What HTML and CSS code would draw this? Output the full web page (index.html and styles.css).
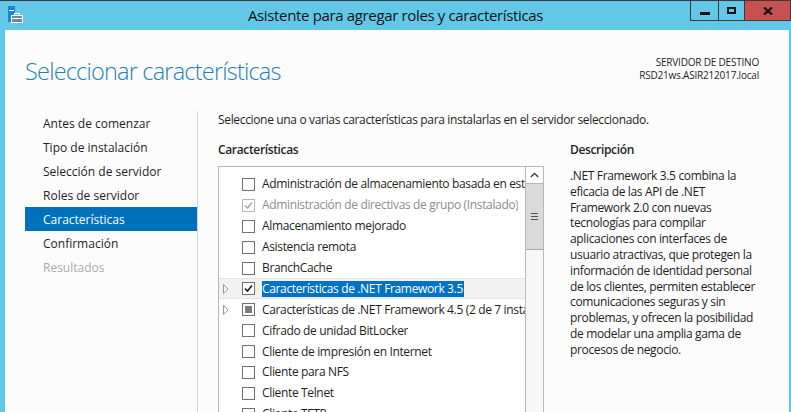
FILE: index.html
```html
<!DOCTYPE html>
<html lang="es">
<head>
<meta charset="utf-8">
<title>Asistente para agregar roles y características</title>
<link rel="stylesheet" href="styles.css">
</head>
<body>
<div class="window">
  <div class="titlebar">
    <div class="tb-icon">
      <svg width="26" height="26" viewBox="0 0 26 26">
        <rect x="8" y="6" width="7" height="16" fill="#1c86d6"/>
        <rect x="9" y="10" width="5" height="1" fill="#ffffff"/>
        <rect x="14.5" y="13.5" width="5" height="3" fill="none" stroke="#ffffff" stroke-width="1"/>
        <rect x="11.5" y="15.5" width="11" height="7" fill="#6c8798" stroke="#ffffff" stroke-width="1"/>
        <rect x="12" y="18" width="10" height="1" fill="#ffffff"/>
      </svg>
    </div>
    <div class="tb-title">Asistente para agregar roles y características</div>
    <div class="tb-buttons">
      <div class="btn btn-min"><span class="glyph-min"></span></div>
      <div class="btn btn-max"><span class="glyph-max"></span></div>
      <div class="btn btn-close">
        <svg width="10" height="8" viewBox="0 0 10 8"><path d="M1 0.5 L9 7.5 M9 0.5 L1 7.5" stroke="#111" stroke-width="2.2"/></svg>
      </div>
    </div>
  </div>
  <div class="client">
    <header class="header">
      <h1 class="page-title">Seleccionar características</h1>
      <div class="dest">
        <div>SERVIDOR DE DESTINO</div>
        <div>RSD21ws.ASIR212017.local</div>
      </div>
    </header>
    <div class="main">
      <nav class="nav">
        <div class="nav-item">Antes de comenzar</div>
        <div class="nav-item">Tipo de instalación</div>
        <div class="nav-item">Selección de servidor</div>
        <div class="nav-item">Roles de servidor</div>
        <div class="nav-item active">Características</div>
        <div class="nav-item">Confirmación</div>
        <div class="nav-item disabled">Resultados</div>
      </nav>
      <div class="content">
        <p class="intro">Seleccione una o varias características para instalarlas en el servidor seleccionado.</p>
        <div class="cols">
          <div class="features">
            <div class="col-title">Características</div>
            <div class="listbox">
              <div class="list">
                <div class="row"><span class="exp"></span><span class="cb"></span><span class="label">Administración de almacenamiento basada en estándares</span></div>
                <div class="row installed"><span class="exp"></span><span class="cb checked"><svg width="11" height="11" viewBox="0 0 11 11"><path d="M2 5.5 L4.5 8 L9 2.5" fill="none" stroke="#a5a5a5" stroke-width="1.5"/></svg></span><span class="label">Administración de directivas de grupo (Instalado)</span></div>
                <div class="row"><span class="exp"></span><span class="cb"></span><span class="label">Almacenamiento mejorado</span></div>
                <div class="row"><span class="exp"></span><span class="cb"></span><span class="label">Asistencia remota</span></div>
                <div class="row"><span class="exp"></span><span class="cb"></span><span class="label">BranchCache</span></div>
                <div class="row selected"><span class="exp"><svg width="6" height="10" viewBox="0 0 6 10"><path d="M0.5 0.5 L5 5 L0.5 9.5 Z" fill="none" stroke="#9a9a9a" stroke-width="1"/></svg></span><span class="cb checked"><svg width="11" height="11" viewBox="0 0 11 11"><path d="M2 5.5 L4.5 8 L9 2.5" fill="none" stroke="#1a1a1a" stroke-width="1.6"/></svg></span><span class="label"><span class="hl">Características de .NET Framework 3.5</span></span></div>
                <div class="row"><span class="exp"><svg width="6" height="10" viewBox="0 0 6 10"><path d="M0.5 0.5 L5 5 L0.5 9.5 Z" fill="none" stroke="#9a9a9a" stroke-width="1"/></svg></span><span class="cb partial"><span class="fill"></span></span><span class="label">Características de .NET Framework 4.5 (2 de 7 instalados)</span></div>
                <div class="row"><span class="exp"></span><span class="cb"></span><span class="label">Cifrado de unidad BitLocker</span></div>
                <div class="row"><span class="exp"></span><span class="cb"></span><span class="label">Cliente de impresión en Internet</span></div>
                <div class="row"><span class="exp"></span><span class="cb"></span><span class="label">Cliente para NFS</span></div>
                <div class="row"><span class="exp"></span><span class="cb"></span><span class="label">Cliente Telnet</span></div>
                <div class="row"><span class="exp"></span><span class="cb"></span><span class="label">Cliente TFTP</span></div>
              </div>
              <div class="scrollbar">
                <div class="sb-up"><svg width="9" height="6" viewBox="0 0 9 6"><path d="M0.8 5 L4.5 1.3 L8.2 5" fill="none" stroke="#333" stroke-width="1.3"/></svg></div>
                <div class="sb-thumb"><span class="grip"></span><span class="grip"></span><span class="grip"></span></div>
                <div class="sb-track"></div>
              </div>
            </div>
          </div>
          <div class="desc">
            <div class="col-title">Descripción</div>
            <p class="desc-text">.NET Framework 3.5 combina la<br>eficacia de las API de .NET<br>Framework 2.0 con nuevas<br>tecnologías para compilar<br>aplicaciones con interfaces de<br>usuario atractivas, que protegen la<br>información de identidad personal<br>de los clientes, permiten establecer<br>comunicaciones seguras y sin<br>problemas, y ofrecen la posibilidad<br>de modelar una amplia gama de<br>procesos de negocio.</p>
          </div>
        </div>
      </div>
    </div>
  </div>
</div>
</body>
</html>
```
FILE: styles.css
```css
html, body {
  margin: 0;
  padding: 0;
  height: 100%;
  overflow: hidden;
}
body {
  background: #63c8e8;
  font-family: "Open Sans", "Noto Sans", sans-serif;
  color: #1e1e1e;
}
.window {
  height: 412px;
  box-sizing: border-box;
  border-top: 1px solid #3a3a3a;
  display: flex;
  flex-direction: column;
}
.titlebar {
  height: 29px;
  flex: none;
  display: grid;
  grid-template-columns: 1fr auto 1fr;
  align-items: start;
}
.tb-icon {
  height: 26px;
  margin-top: -1px;
}
.tb-icon svg { display: block; }
.tb-title {
  font-size: 15px;
  line-height: 29px;
  letter-spacing: -0.35px;
  color: #121212;
  white-space: nowrap;
}
.tb-buttons {
  justify-self: end;
  display: flex;
}
.btn {
  box-sizing: border-box;
  height: 20px;
  border-right: 1px solid #3a3a3a;
  border-bottom: 1px solid #3a3a3a;
  display: flex;
  align-items: center;
  justify-content: center;
}
.btn-min { width: 29px; border-left: 1px solid #3a3a3a; }
.btn-max { width: 26px; }
.btn-close { width: 46px; background: #c75050; }
.glyph-min {
  width: 10px;
  height: 3px;
  background: #111;
  margin-top: 5px;
}
.glyph-max {
  width: 5px;
  height: 3px;
  border: 2px solid #111;
}
.btn-close svg { display: block; }
.client {
  flex: 1;
  margin: 0 2px 0 5px;
  background: #fcfcfc;
  display: flex;
  flex-direction: column;
  min-height: 0;
}
.header {
  height: 81px;
  flex: none;
  display: flex;
  justify-content: space-between;
  padding: 0 30px 0 20px;
}
.page-title {
  margin: 0;
  padding-top: 25px;
  font-size: 23.5px;
  line-height: 32px;
  font-weight: 300;
  letter-spacing: -0.8px;
  color: #1f80b6;
  white-space: nowrap;
}
.dest {
  margin-top: 26px;
  font-size: 10px;
  line-height: 13px;
  letter-spacing: -0.2px;
  text-align: right;
  color: #1e1e1e;
}
.main {
  flex: 1;
  display: flex;
  min-height: 0;
}
.nav {
  width: 172px;
  margin-left: 20px;
  border-right: 1px solid #d3d3d3;
  flex: none;
}
.nav-item {
  box-sizing: border-box;
  height: 24px;
  line-height: 22px;
  padding: 2px 0 0 18px;
  font-size: 12px;
  color: #1e1e1e;
  white-space: nowrap;
}
.nav-item.active {
  background: #0072bc;
  color: #ffffff;
}
.nav-item.disabled { color: #ababab; }
.content {
  padding: 1px 0 0 20px;
  flex: 1;
  min-width: 0;
}
.intro {
  margin: 0;
  font-size: 12px;
  line-height: 16px;
  letter-spacing: -0.34px;
  white-space: nowrap;
}
.cols {
  display: flex;
  gap: 26px;
  margin-top: 14px;
}
.col-title {
  font-size: 12px;
  line-height: 16px;
  font-weight: 600;
  letter-spacing: -0.35px;
  margin-bottom: 8px;
}
.features { width: 326px; flex: none; }
.listbox {
  box-sizing: border-box;
  width: 326px;
  height: 260px;
  border: 1px solid #b8b8b8;
  display: flex;
  background: #ffffff;
}
.list {
  flex: 1;
  min-width: 0;
  padding-top: 7px;
  overflow: hidden;
}
.row {
  box-sizing: border-box;
  height: 20.9px;
  display: flex;
  align-items: center;
  padding-left: 4px;
  font-size: 12px;
  letter-spacing: -0.35px;
  white-space: nowrap;
}
.row.selected {
  background: #f2f2f2;
  border-top: 1px solid #e6e6e6;
  border-bottom: 1px solid #e6e6e6;
}
.exp {
  width: 19px;
  flex: none;
  display: flex;
  align-items: center;
}
.exp svg { display: block; }
.cb {
  box-sizing: border-box;
  width: 13px;
  height: 13px;
  border: 1px solid #707070;
  background: #ffffff;
  flex: none;
  margin-right: 7px;
  display: flex;
  align-items: center;
  justify-content: center;
}
.cb svg { display: block; }
.installed .cb { border-color: #b4b4b4; }
.installed .label { color: #8c8c8c; }
.cb.partial .fill {
  width: 7px;
  height: 7px;
  background: #7b7b7b;
}
.label {
  overflow: hidden;
  line-height: 16px;
}
.hl {
  background: #0072c6;
  color: #ffffff;
  padding: 0 1px;
  margin-left: -1px;
}
.scrollbar {
  width: 17px;
  flex: none;
  border-left: 1px solid #b8b8b8;
  display: flex;
  flex-direction: column;
  background: #f7f7f7;
}
.sb-up {
  height: 17px;
  box-sizing: border-box;
  border-bottom: 1px solid #b8b8b8;
  background: #ffffff;
  display: flex;
  align-items: center;
  justify-content: center;
}
.sb-up svg { display: block; }
.sb-thumb {
  height: 66px;
  box-sizing: border-box;
  background: #dadada;
  border-bottom: 1px solid #a8a8a8;
  display: flex;
  flex-direction: column;
  align-items: center;
  justify-content: center;
  gap: 2px;
}
.grip {
  width: 7px;
  height: 1px;
  background: #555555;
}
.sb-track { flex: 1; }
.desc { width: 200px; flex: none; }
.desc .col-title { margin-bottom: 10px; }
.desc-text {
  margin: 0;
  font-size: 12px;
  line-height: 15.8px;
  letter-spacing: -0.35px;
  white-space: nowrap;
}
```
